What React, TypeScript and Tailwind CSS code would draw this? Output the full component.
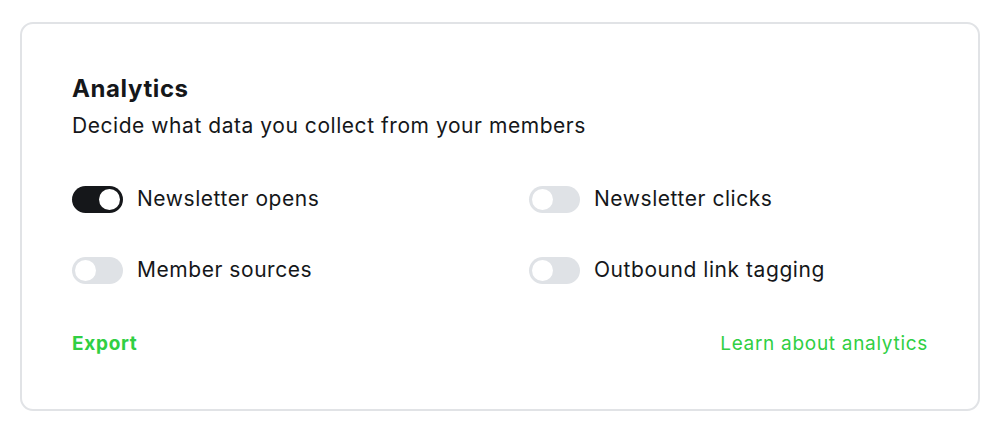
import React, { useState } from 'react';

type ToggleProps = {
  checked: boolean;
  onChange: () => void;
  label: string;
};

function Toggle({ checked, onChange, label }: ToggleProps) {
  return (
    <label className="flex items-center gap-[14px] h-[28px] cursor-pointer">
      <button
        type="button"
        onClick={onChange}
        className={`relative shrink-0 w-[51px] h-[27px] rounded-full transition-colors ${checked ? 'bg-[#15171a]' : 'bg-[#dfe2e6]'}`}
      >
        <span
          className={`absolute top-[3px] w-[21px] h-[21px] rounded-full bg-white transition-all ${checked ? 'left-[27px]' : 'left-[3px]'}`}
        />
      </button>
      <span className="text-[21px] leading-[28px] tracking-[0.55px] text-[#15171a]">{label}</span>
    </label>
  );
}

export default function App() {
  const [opts, setOpts] = useState({
    opens: true,
    clicks: false,
    sources: false,
    tagging: false,
  });

  const flip = (key: keyof typeof opts) => setOpts((s) => ({ ...s, [key]: !s[key] }));

  return (
    <div className="min-h-screen bg-white pt-[22px] px-[20px]" style={{ fontFamily: 'Inter, "Noto Sans", sans-serif' }}>
      <div className="w-[960px] h-[389px] border-2 border-[#e1e3e6] rounded-[13px] pl-[50px] pr-[50px] pt-[49px] flex flex-col">
        <h2 className="text-[24px] leading-[32px] font-bold tracking-[0.6px] text-[#15171a]">Analytics</h2>
        <p className="mt-[7px] text-[21px] leading-[28px] tracking-[0.55px] text-[#15171a]">
          Decide what data you collect from your members
        </p>

        {/* Toggles */}
        <div className="grid grid-cols-[457px_1fr] gap-y-[43px] mt-[45px]">
          <Toggle checked={opts.opens} onChange={() => flip('opens')} label="Newsletter opens" />
          <Toggle checked={opts.clicks} onChange={() => flip('clicks')} label="Newsletter clicks" />
          <Toggle checked={opts.sources} onChange={() => flip('sources')} label="Member sources" />
          <Toggle checked={opts.tagging} onChange={() => flip('tagging')} label="Outbound link tagging" />
        </div>

        <div className="flex justify-between items-center h-[28px] mt-[46px]">
          <button className="text-[19px] leading-[28px] font-bold tracking-[0.7px] text-[#30cf43]">Export</button>
          <a href="#" className="text-[19px] leading-[28px] tracking-[0.7px] text-[#30cf43]">Learn about analytics</a>
        </div>
      </div>
    </div>
  );
}
